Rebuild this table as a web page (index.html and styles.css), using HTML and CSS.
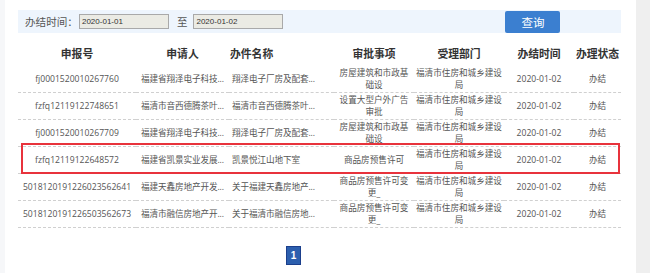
FILE: index.html
```html
<!DOCTYPE html>
<html lang="zh">
<head>
<meta charset="utf-8">
<title>办结查询</title>
<link rel="stylesheet" href="styles.css">
</head>
<body>
<div class="page">
  <div class="side-left"></div>
  <div class="main">
    <div class="search-bar">
      <span class="label">办结时间：</span>
      <span class="date-input">2020-01-01</span>
      <span class="to">至</span>
      <span class="date-input">2020-01-02</span>
      <span class="btn">查询</span>
    </div>
    <table class="grid">
      <colgroup>
        <col class="c1"><col class="c2"><col class="c3"><col class="c4"><col class="c5"><col class="c6"><col class="c7">
      </colgroup>
      <thead>
        <tr><th>申报号</th><th>申请人</th><th class="left">办件名称</th><th>审批事项</th><th>受理部门</th><th>办结时间</th><th>办理状态</th></tr>
      </thead>
      <tbody>
        <tr><td>fj0001520010267760</td><td class="trunc">福建省翔泽电子科技...</td><td class="trunc left">翔泽电子厂房及配套...</td><td class="wrap">房屋建筑和市政基础设</td><td class="wrap">福清市住房和城乡建设局</td><td>2020-01-02</td><td>办结</td></tr>
        <tr><td>fzfq12119122748651</td><td class="trunc">福清市音西德腾茶叶...</td><td class="trunc left">福清市音西德腾茶叶...</td><td class="wrap">设置大型户外广告审批</td><td class="wrap">福清市住房和城乡建设局</td><td>2020-01-02</td><td>办结</td></tr>
        <tr><td>fj0001520010267709</td><td class="trunc">福建省翔泽电子科技...</td><td class="trunc left">翔泽电子厂房及配套...</td><td class="wrap">房屋建筑和市政基础设</td><td class="wrap">福清市住房和城乡建设局</td><td>2020-01-02</td><td>办结</td></tr>
        <tr><td>fzfq12119122648572</td><td class="trunc">福建省凯景实业发展...</td><td class="trunc left">凯景悦江山地下室</td><td class="wrap">商品房预售许可</td><td class="wrap">福清市住房和城乡建设局</td><td>2020-01-02</td><td>办结</td></tr>
        <tr><td>5018120191226023562641</td><td class="trunc">福建天鑫房地产开发...</td><td class="trunc left">关于福建天鑫房地产...</td><td class="wrap">商品房预售许可变更_</td><td class="wrap">福清市住房和城乡建设局</td><td>2020-01-02</td><td>办结</td></tr>
        <tr><td>5018120191226503562673</td><td class="trunc">福清市融信房地产开...</td><td class="trunc left">关于福清市融信房地...</td><td class="wrap">商品房预售许可变更_</td><td class="wrap">福清市住房和城乡建设局</td><td>2020-01-02</td><td>办结</td></tr>
      </tbody>
    </table>
    <div class="pager"><span class="page-num">1</span></div>
    <div class="highlight"></div>
  </div>
  <div class="side-right"></div>
</div>
</body>
</html>
```

FILE: styles.css
```css
html, body {
  margin: 0;
  padding: 0;
  background: #ffffff;
}

.page {
  display: flex;
  width: 650px;
  height: 273px;
  overflow: hidden;
  font-family: "Open Sans", "Noto Sans CJK SC", sans-serif;
}

.side-left {
  width: 5px;
  background: #f6f7f9;
}

.side-right {
  width: 14px;
  background: #efefef;
}

.main {
  position: relative;
  flex: 1;
  padding: 10px 15px 0 13px;
  background: #ffffff;
}

.search-bar {
  display: flex;
  align-items: center;
  height: 23px;
  padding-left: 7px;
  background: #eef5fd;
}

.label {
  font-size: 10.6px;
  color: #555555;
  font-family: "Noto Sans CJK SC", sans-serif;
  margin-right: 1px;
}

.date-input {
  box-sizing: border-box;
  width: 90px;
  height: 15px;
  border: 1px solid #a9a9a9;
  background: #ebebe4;
  font-family: "Liberation Sans", sans-serif;
  font-size: 8px;
  line-height: 13px;
  color: #333333;
  padding-left: 2px;
}

.to {
  font-size: 10.5px;
  color: #555555;
  font-family: "Noto Sans CJK SC", sans-serif;
  margin: 0 6px 0 8px;
}

.btn {
  box-sizing: border-box;
  width: 55px;
  height: 22px;
  margin-left: 222px;
  background: #3b7fd0;
  border-radius: 2px;
  color: #ffffff;
  font-family: "Noto Sans CJK SC", sans-serif;
  font-size: 11.5px;
  line-height: 22px;
  text-align: center;
}

.grid {
  width: 603px;
  margin-top: 7px;
  border-collapse: collapse;
  table-layout: fixed;
}

.c1 { width: 118px; }
.c2 { width: 93px; }
.c3 { width: 105px; }
.c4 { width: 80px; }
.c5 { width: 90px; }
.c6 { width: 70px; }
.c7 { width: 47px; }

.grid th {
  height: 26px;
  padding: 0;
  font-family: "Noto Sans CJK SC", sans-serif;
  font-size: 10.8px;
  font-weight: 700;
  color: #333333;
  text-align: center;
  vertical-align: middle;
}

.grid th.left {
  text-align: left;
  padding-left: 1px;
}

.grid td {
  height: 26px;
  padding: 0 1px;
  border-bottom: 1px dashed #d0d0d0;
  font-size: 8.6px;
  line-height: 12px;
  color: #555555;
  text-align: center;
  vertical-align: middle;
}

.grid td.trunc {
  white-space: nowrap;
  text-align: left;
  padding-left: 5px;
  padding-right: 0;
  letter-spacing: -0.1px;
}

.grid td.trunc.left {
  padding-left: 3px;
}

.grid td.wrap {
  padding: 0 3px;
}

.grid td.wrap + td.wrap {
  padding: 0 1px;
}

.pager {
  padding: 14px 0 0 268px;
}

.page-num {
  display: inline-block;
  box-sizing: border-box;
  width: 15px;
  height: 19px;
  background: #2c5fae;
  border: 1px solid #1b3f8c;
  color: #ffffff;
  font-family: "Liberation Sans", sans-serif;
  font-weight: 700;
  font-size: 10px;
  line-height: 17px;
  text-align: center;
}

.highlight {
  position: absolute;
  left: 16px;
  top: 143px;
  width: 599px;
  height: 31px;
  box-sizing: border-box;
  border: 2px solid #e8333c;
}
```
